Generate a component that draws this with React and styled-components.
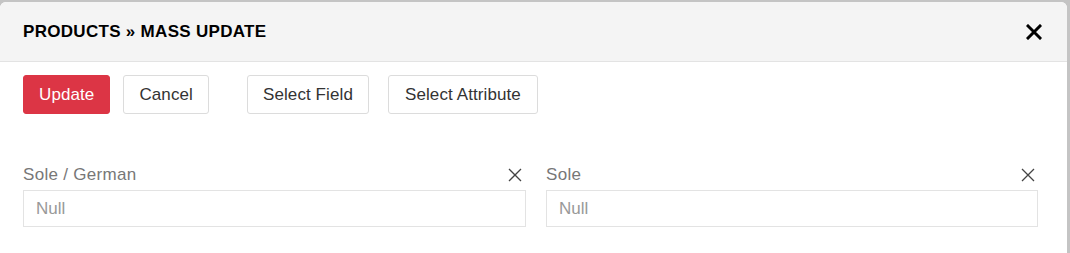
import React from 'react';
import styled, { createGlobalStyle } from 'styled-components';

const Global = createGlobalStyle`
  html, body {
    margin: 0;
    padding: 0;
    background: #c4c4c4;
    font-family: Arial, "Liberation Sans", Helvetica, sans-serif;
  }
`;

const Modal = styled.div`
  width: 1067px;
  height: 251px;
  margin-top: 2px;
  background: #ffffff;
  border-radius: 6px 6px 0 0;
  overflow: hidden;
`;

const Header = styled.header`
  height: 59px;
  display: flex;
  align-items: center;
  justify-content: space-between;
  padding: 0 23px 0 23px;
  background: #f4f4f4;
  border-bottom: 1px solid #e3e3e3;
`;

const Title = styled.h1`
  margin: 0;
  font-size: 17px;
  font-weight: 700;
  color: #000;
  letter-spacing: 0.3px;
`;

const Close = styled.button`
  border: 0;
  background: none;
  padding: 0;
  margin-right: 2px;
  width: 16px;
  height: 16px;
  display: flex;
  cursor: pointer;
`;

const Toolbar = styled.div`
  display: flex;
  align-items: center;
  padding: 13px 23px 0;
`;

const Button = styled.button`
  height: 39px;
  padding: 0 ${p => p.$px || 15}px;
  margin-left: ${p => p.$gap || 0}px;
  font-family: inherit;
  font-size: 17px;
  letter-spacing: 0.1px;
  border-radius: 3px;
  border: 1px solid ${p => (p.$primary ? '#dc3545' : '#dcdcdc')};
  background: ${p => (p.$primary ? '#dc3545' : '#ffffff')};
  color: ${p => (p.$primary ? '#ffffff' : '#333333')};
  cursor: pointer;
`;

const Fields = styled.div`
  display: grid;
  grid-template-columns: 503px 492px;
  column-gap: 20px;
  padding: 49px 0 0 23px;
`;

const Field = styled.div`
  display: flex;
  flex-direction: column;
`;

const LabelRow = styled.div`
  display: flex;
  align-items: center;
  justify-content: space-between;
  height: 24px;
  padding-right: ${p => p.$pr}px;
  margin-bottom: 3px;
`;

const Label = styled.label`
  font-size: 17px;
  letter-spacing: 0.3px;
  color: #777;
`;

const Remove = styled.button`
  border: 0;
  background: none;
  padding: 0;
  width: 14px;
  height: 14px;
  display: flex;
  cursor: pointer;
`;

const Input = styled.input`
  box-sizing: border-box;
  width: 100%;
  height: 37px;
  border: 1px solid #e3e3e3;
  padding: 0 12px;
  font-family: inherit;
  font-size: 17px;
  color: #333;
  outline: none;
  &::placeholder {
    color: #999;
  }
`;

const BoldX = () => (
  <svg width="16" height="16" viewBox="0 0 16 16">
    <path d="M2 2L14 14M14 2L2 14" stroke="#000" strokeWidth="3" strokeLinecap="square" />
  </svg>
);

const ThinX = () => (
  <svg width="14" height="14" viewBox="0 0 14 14">
    <path d="M1 1L13 13M13 1L1 13" stroke="#444" strokeWidth="1.3" />
  </svg>
);

const fields = [
  { label: 'Sole / German', pr: 4 },
  { label: 'Sole', pr: 3 },
];

export default function App() {
  return (
    <>
      <Global />
      <Modal>
        <Header>
          <Title>PRODUCTS » MASS UPDATE</Title>
          <Close aria-label="Close"><BoldX /></Close>
        </Header>
        <Toolbar>
          <Button $primary>Update</Button>
          <Button $gap={13}>Cancel</Button>
          <Button $gap={38}>Select Field</Button>
          <Button $gap={19} $px={16}>Select Attribute</Button>
        </Toolbar>
        <Fields>
          {fields.map(f => (
            <Field key={f.label}>
              <LabelRow $pr={f.pr}>
                <Label>{f.label}</Label>
                <Remove aria-label="Remove"><ThinX /></Remove>
              </LabelRow>
              <Input placeholder="Null" />
            </Field>
          ))}
        </Fields>
      </Modal>
    </>
  );
}
